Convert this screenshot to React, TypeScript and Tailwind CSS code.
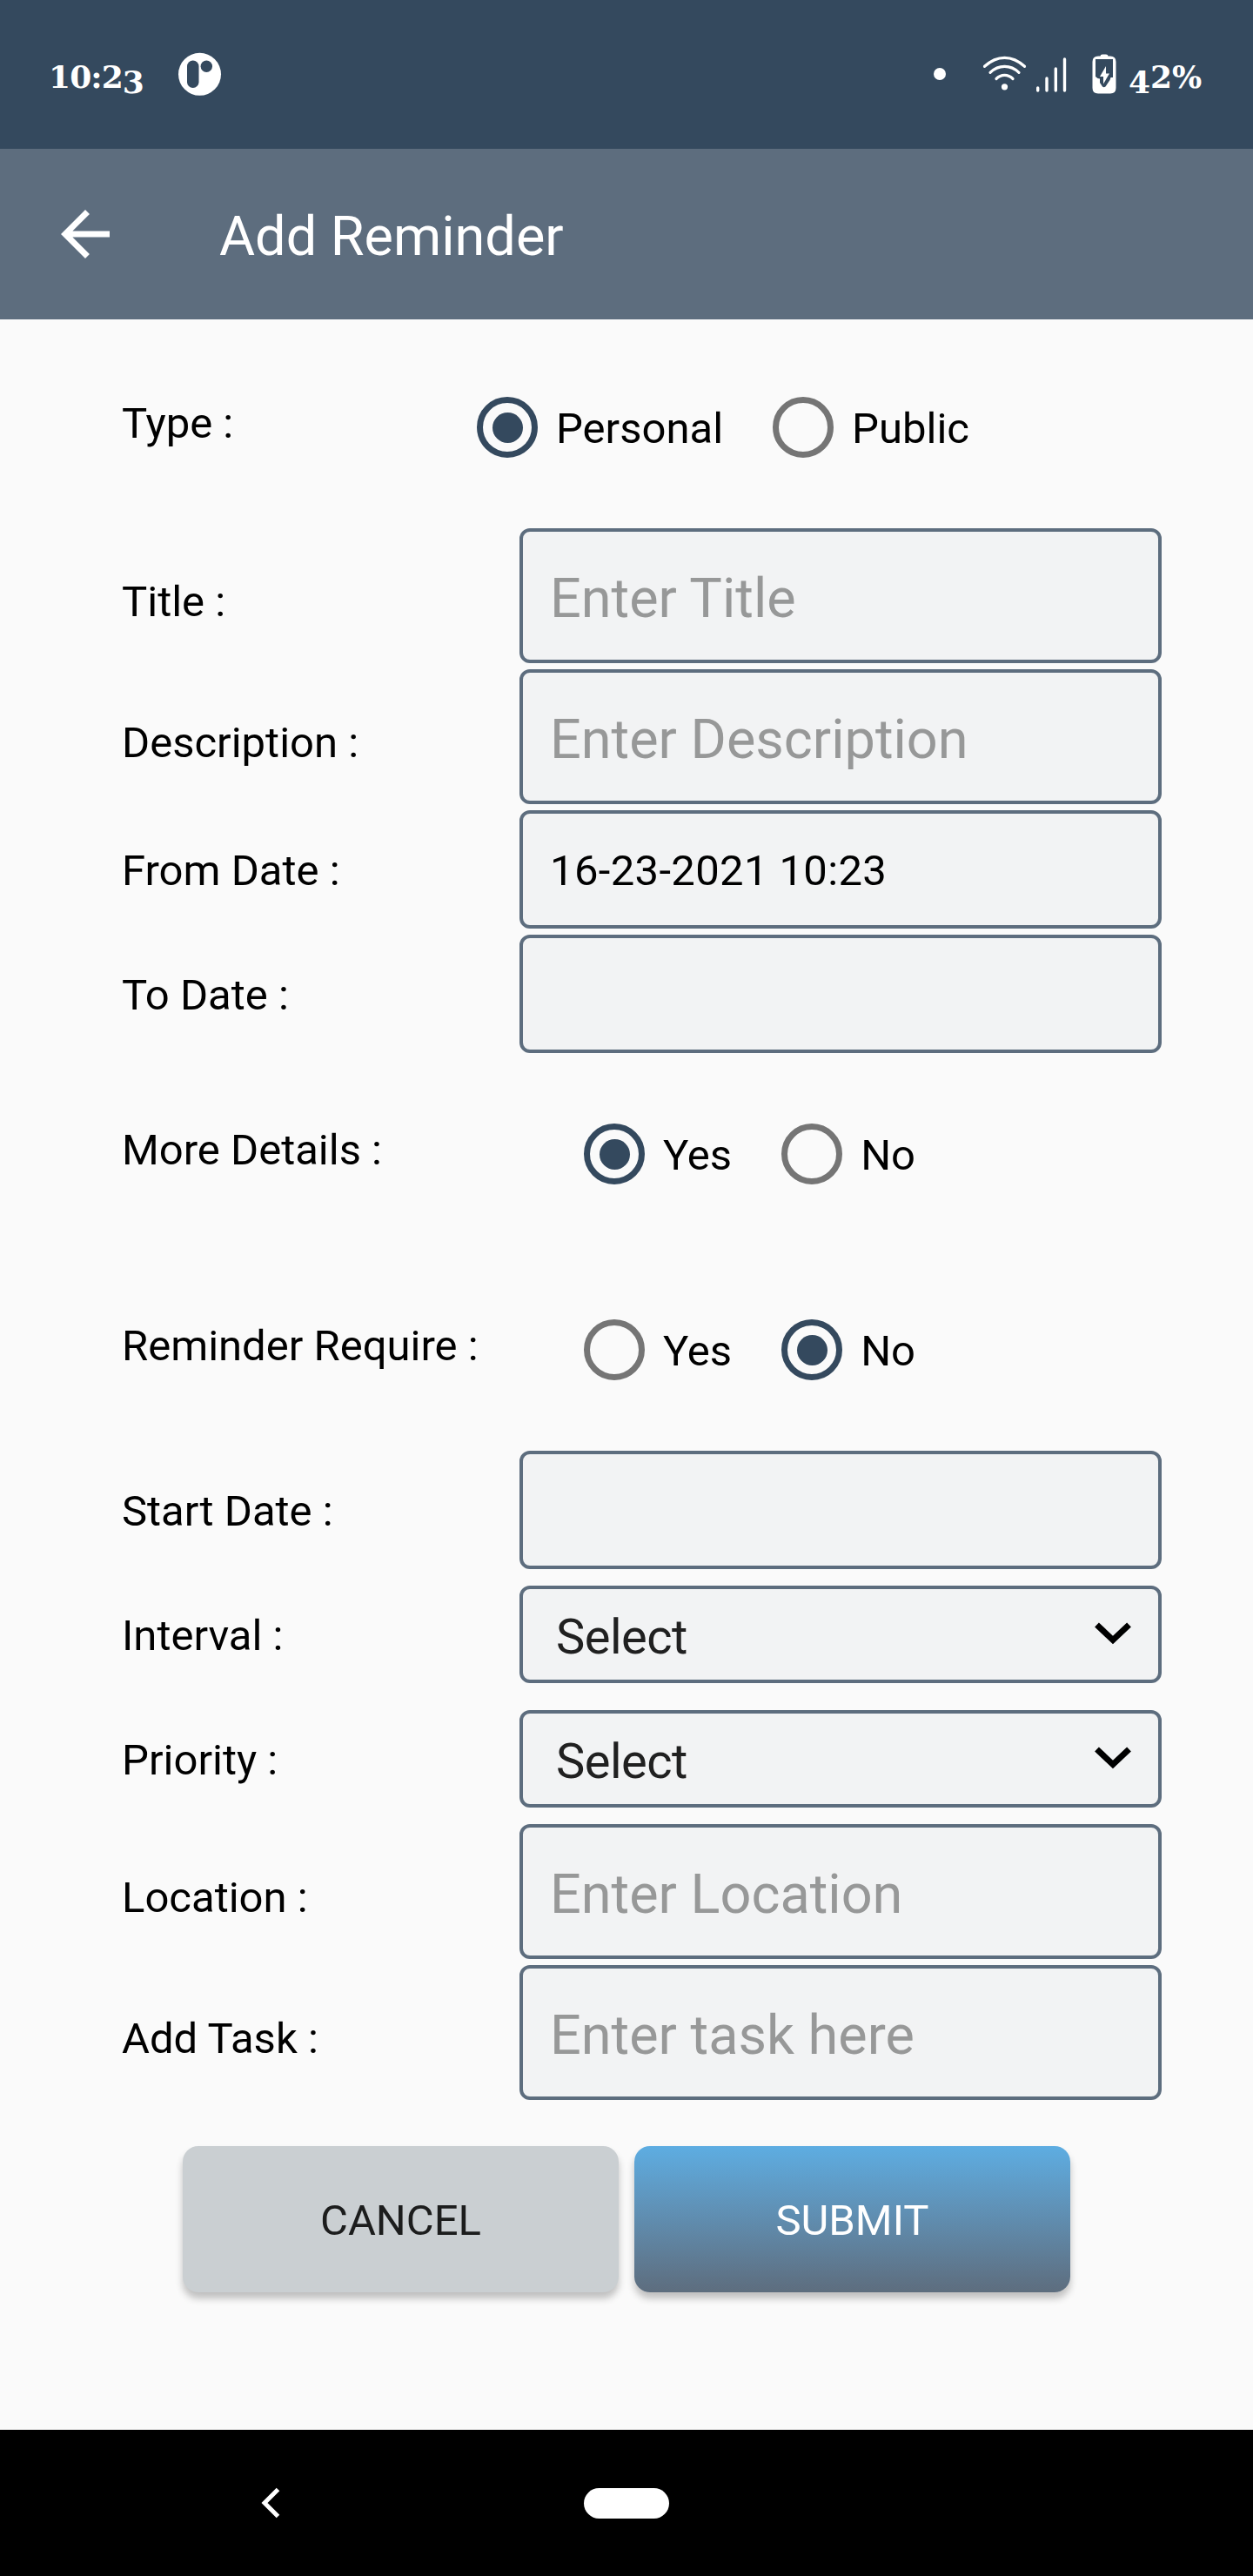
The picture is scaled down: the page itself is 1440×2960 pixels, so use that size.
import React from "react";

const label = "text-[49px] leading-[58px] text-black whitespace-nowrap";

function StatusBar() {
  return (
    <header className="flex h-[171px] items-start bg-[#34495e] pl-[56px] pr-[56px] text-white font-['DejaVu_Serif',serif] text-[36px] font-bold leading-[42px]">
      <div className="mt-[67px] flex w-[109px] tracking-[-0.9px]">
        <span>10:2</span>
        <span className="relative top-[6px]">3</span>
      </div>
      <svg className="ml-[40px] mt-[60px] h-[50px] w-[50px] shrink-0" viewBox="0 0 50 50">
        <circle cx="24.5" cy="25.3" r="24.5" fill="#fff" />
        <rect x="10" y="9.5" width="13.5" height="31.5" rx="6.7" fill="#34495e" />
        <circle cx="32.3" cy="16.3" r="6.7" fill="#34495e" />
      </svg>
      <div className="ml-auto flex">
        <span className="mt-[78px] h-[14px] w-[14px] rounded-full bg-white" />
        <svg className="ml-[42px] mt-[62px] h-[44px] w-[98px]" viewBox="0 0 98 44" fill="none" stroke="#fff" strokeLinecap="round">
          <path d="M2.500 14.300C17 1 34 1 48.500 14.300" strokeWidth="3.200" />
          <path d="M9 21.300C18.500 12 32.500 12 42 21.300" strokeWidth="3.200" />
          <path d="M16 28.500C21.500 23 29.500 23 35 28.500" strokeWidth="3.200" />
          <circle cx="25.500" cy="37.800" r="3.600" fill="#fff" stroke="none" />
          <path d="M63.700 39V42M74 28V42M84.300 17V42M94.500 6V42" strokeWidth="3.400" />
        </svg>
        <svg className="ml-[28px] mt-[62px] h-[46px] w-[28px]" viewBox="0 0 28 46">
          <path d="M9.500 2.500Q9.500 .5 12 .5H16Q18.500 .5 18.500 2.500H21Q27.500 2.500 27.500 9V39Q27.500 45.500 21 45.500H7Q.5 45.500 .5 39V9Q.5 2.500 7 2.500Z" fill="#fff" />
          <path d="M4 6H24V27H21.500L20.500 30L15.500 37.500Q13.500 39 12 37.500L9 33V28.500L6.500 28L4 26Z" fill="#34495e" />
          <path d="M16 14L9 26H13V34.500L20 22.500H16Z" fill="#fff" />
        </svg>
        <div className="ml-[14px] mt-[67px] flex w-[87px]">
          <span className="relative top-[6px]">4</span>
          <span>2%</span>
        </div>
      </div>
    </header>
  );
}

function Radio({ text, checked = false }: { text: string; checked?: boolean }) {
  return (
    <div className="flex items-center">
      <span
        className={
          "flex h-[70px] w-[70px] shrink-0 items-center justify-center rounded-full border-[7px] " +
          (checked ? "border-[#34495e]" : "border-[#757575]")
        }
      >
        {checked && <span className="h-[35px] w-[35px] shrink-0 rounded-full bg-[#34495e]" />}
      </span>
      <span className={label + " relative top-[2px] ml-[21px]"}>{text}</span>
    </div>
  );
}

function RadioRow({ name, className, children }: { name: string; className: string; children: React.ReactNode }) {
  return (
    <div className="flex h-[70px] items-center">
      <span className={label + " relative -top-[4px] w-[400px]"}>{name}</span>
      <div className={"flex " + className}>{children}</div>
    </div>
  );
}

const box = "flex w-[738px] items-center rounded-[12px] border-[4px] border-[#5d6d7e] bg-[#f2f3f4]";

function Field({ name, value, placeholder, tall = false }: { name: string; value?: string; placeholder?: string; tall?: boolean }) {
  return (
    <div className="flex">
      <span className={label + (tall ? " w-[457px] pt-[56px]" : " w-[457px] pt-[41px]")}>{name}</span>
      <div className={box + (tall ? " h-[155px] pl-[31px]" : " h-[136px] pl-[31px]")}>
        {placeholder && <span className="relative top-[3px] text-[63px] leading-[74px] text-[#979898]">{placeholder}</span>}
        {value && <span className={label + " relative top-[2px] tracking-[0.35px]"}>{value}</span>}
      </div>
    </div>
  );
}

function SelectField({ name }: { name: string }) {
  return (
    <div className="flex">
      <span className={label + " w-[457px] pt-[29px]"}>{name}</span>
      <div className={box + " h-[112px] justify-between pl-[38px] pr-[31px]"}>
        <span className="relative top-[3px] text-[56px] leading-[66px] tracking-[-0.5px] text-[#202020]">Select</span>
        <svg className="relative -top-[1px] h-[26px] w-[42px]" viewBox="0 0 42 26" fill="none" stroke="#000" strokeWidth="7">
          <path d="M2.500 3L21 20.500L39.500 3" />
        </svg>
      </div>
    </div>
  );
}

export default function App() {
  return (
    <div className="flex h-[2960px] w-[1440px] flex-col overflow-hidden bg-[#fafafa] font-[Roboto,sans-serif]">
      <StatusBar />
      <div className="flex h-[196px] items-center bg-[#5d6d7e] text-white">
        <svg className="ml-[70px] h-[56px] w-[56px]" viewBox="4 4 16 16" fill="#fff">
          <path d="M20 11H7.830l5.590-5.590L12 4l-8 8 8 8 1.410-1.410L7.830 13H20v-2z" />
        </svg>
        <h1 className="relative top-[3px] ml-[126px] text-[63px] leading-[74px]">Add Reminder</h1>
      </div>

      <main className="flex flex-1 flex-col pl-[140px] pt-[89px]">
        <RadioRow name="Type :" className="ml-[8px] gap-[57px]">
          <Radio text="Personal" checked />
          <Radio text="Public" />
        </RadioRow>

        <div className="mt-[81px] flex flex-col gap-[7px]">
          <Field name="Title :" placeholder="Enter Title" tall />
          <Field name="Description :" placeholder="Enter Description" tall />
          <Field name="From Date :" value="16-23-2021 10:23" />
          <Field name="To Date :" />
        </div>

        <div className="mt-[81px] flex flex-col gap-[155px]">
          <RadioRow name="More Details :" className="ml-[131px] gap-[57px]">
            <Radio text="Yes" checked />
            <Radio text="No" />
          </RadioRow>
          <RadioRow name="Reminder Require :" className="ml-[131px] gap-[57px]">
            <Radio text="Yes" />
            <Radio text="No" checked />
          </RadioRow>
        </div>

        <div className="mt-[81px] flex flex-col">
          <Field name="Start Date :" />
          <div className="mt-[19px] flex flex-col gap-[31px]">
            <SelectField name="Interval :" />
            <SelectField name="Priority :" />
          </div>
          <div className="mt-[19px] flex flex-col gap-[7px]">
            <Field name="Location :" placeholder="Enter Location" tall />
            <Field name="Add Task :" placeholder="Enter task here" tall />
          </div>
        </div>

        <div className="ml-[70px] mt-[53px] flex gap-[18px] text-[49px] leading-[58px]">
          <button className="h-[168px] w-[501px] rounded-[18px] bg-[#cacfd2] pt-[4px] text-[#1c1d1d] shadow-[0_7px_8px_rgba(0,0,0,0.24)]">CANCEL</button>
          <button className="h-[168px] w-[501px] rounded-[18px] bg-linear-to-b from-[#5dade2] to-[#5d6d7e] pt-[4px] text-white shadow-[0_7px_8px_rgba(0,0,0,0.24)]">SUBMIT</button>
        </div>
      </main>

      <nav className="flex h-[168px] items-center bg-black">
        <svg className="ml-[300px] h-[36px] w-[22px]" viewBox="0 0 22 36" fill="none" stroke="#fff" strokeWidth="5">
          <path d="M19.500 2.500L4 18L19.500 33.500" />
        </svg>
        <span className="ml-[349px] h-[35px] w-[98px] rounded-full bg-white" />
      </nav>
    </div>
  );
}
